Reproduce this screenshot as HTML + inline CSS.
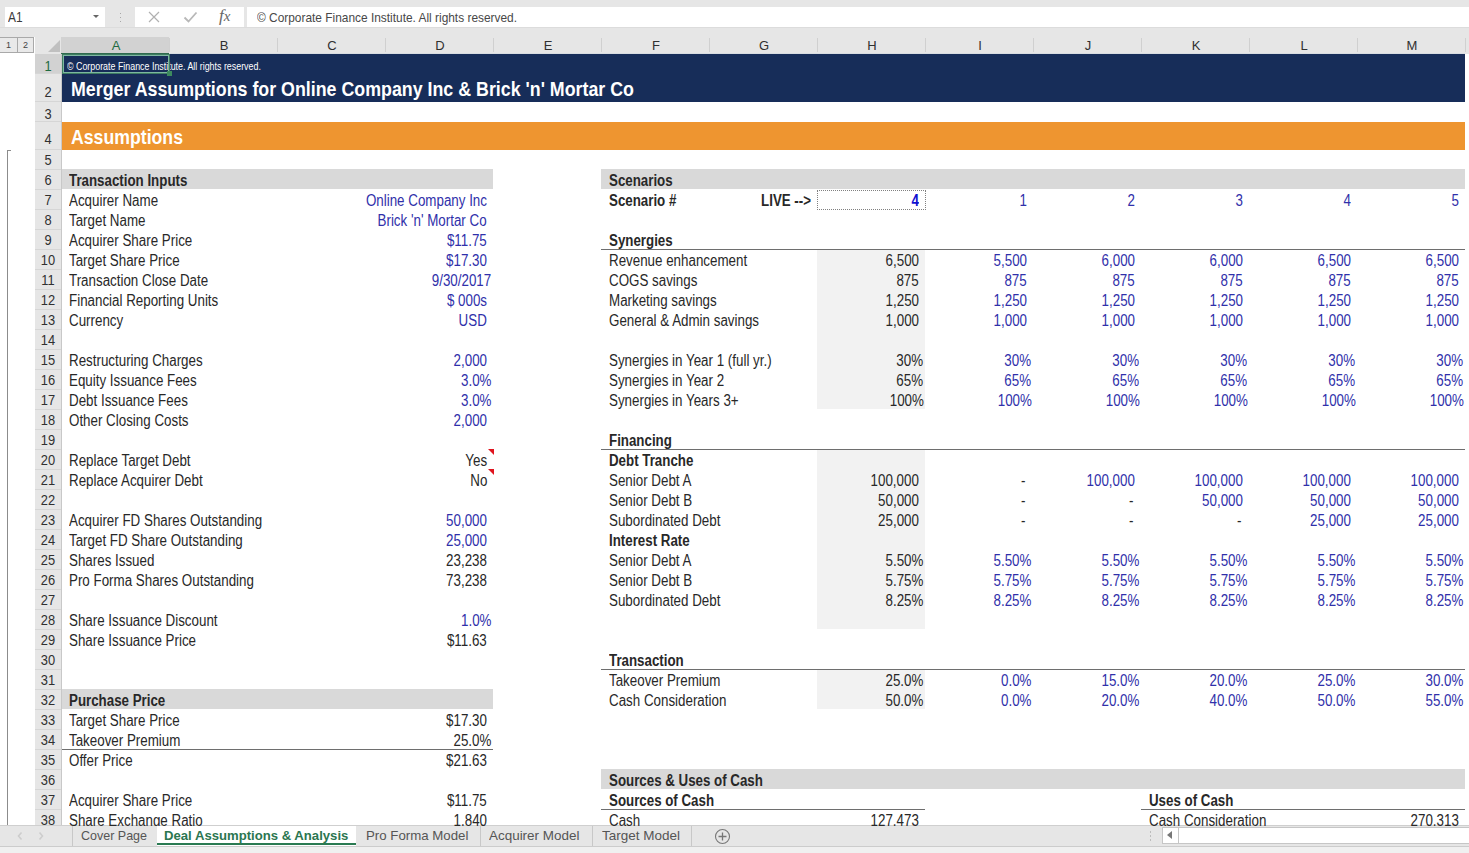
<!DOCTYPE html>
<html><head><meta charset="utf-8"><style>
html,body{margin:0;padding:0;}
body{width:1469px;height:853px;position:relative;overflow:hidden;background:#ffffff;font-family:"Liberation Sans",sans-serif;}
.t{position:absolute;white-space:pre;}
</style></head><body>
<div style="position:absolute;left:0px;top:0px;width:1469px;height:37px;background:#e6e6e6;"></div>
<div style="position:absolute;left:5px;top:7px;width:100px;height:20px;background:#ffffff;"></div>
<div class="t" style="left:8px;top:7px;font-size:14.5px;line-height:20px;color:#3a3a3a;transform:scaleX(0.82);transform-origin:0 0">A1</div>
<div style="position:absolute;left:93px;top:15px;width:0;height:0;border-top:3px solid #666;border-left:3.5px solid transparent;border-right:3.5px solid transparent"></div>
<div style="position:absolute;left:119.5px;top:12.5px;width:1.5px;height:1.5px;background:#a8a8a8;"></div>
<div style="position:absolute;left:119.5px;top:16.5px;width:1.5px;height:1.5px;background:#a8a8a8;"></div>
<div style="position:absolute;left:119.5px;top:20.5px;width:1.5px;height:1.5px;background:#a8a8a8;"></div>
<div style="position:absolute;left:135px;top:7px;width:109px;height:20px;background:#ffffff;"></div>
<svg style="position:absolute;left:147px;top:10px" width="16" height="14"><path d="M2 2 L12 12 M12 2 L2 12" stroke="#b0b0b0" stroke-width="1.2" fill="none"/></svg>
<svg style="position:absolute;left:182px;top:10px" width="18" height="14"><path d="M2.5 7.5 L6.5 11.5 L14.5 2.5" stroke="#b8b8b8" stroke-width="1.8" fill="none"/></svg>
<div class="t" style="left:219px;top:6px;font-family:'Liberation Serif';font-style:italic;font-size:17px;line-height:20px;color:#666">f<span style="font-size:15px">x</span></div>
<div style="position:absolute;left:247px;top:7px;width:1222px;height:20px;background:#ffffff;"></div>
<div class="t" style="left:257px;top:8px;font-size:13px;line-height:20px;color:#484848;transform:scaleX(0.915);transform-origin:0 0">© Corporate Finance Institute. All rights reserved.</div>
<div style="position:absolute;left:0px;top:27px;width:1469px;height:1px;background:#dcdcdc;"></div>
<div style="position:absolute;left:35px;top:37px;width:1434px;height:17px;background:#e6e6e6;"></div>
<div style="position:absolute;left:61px;top:37px;width:108px;height:16px;background:#d2d2d2;"></div>
<div style="position:absolute;left:61px;top:53px;width:108px;height:1px;background:#2f6b4e;"></div>
<div style="position:absolute;left:169px;top:53px;width:1296px;height:1px;background:#d8dde2;"></div>
<div style="position:absolute;left:169px;top:38px;width:1px;height:14px;background:#d0d0d0;"></div>
<div style="position:absolute;left:277px;top:38px;width:1px;height:14px;background:#d0d0d0;"></div>
<div style="position:absolute;left:385px;top:38px;width:1px;height:14px;background:#d0d0d0;"></div>
<div style="position:absolute;left:493px;top:38px;width:1px;height:14px;background:#d0d0d0;"></div>
<div style="position:absolute;left:601px;top:38px;width:1px;height:14px;background:#d0d0d0;"></div>
<div style="position:absolute;left:709px;top:38px;width:1px;height:14px;background:#d0d0d0;"></div>
<div style="position:absolute;left:817px;top:38px;width:1px;height:14px;background:#d0d0d0;"></div>
<div style="position:absolute;left:925px;top:38px;width:1px;height:14px;background:#d0d0d0;"></div>
<div style="position:absolute;left:1033px;top:38px;width:1px;height:14px;background:#d0d0d0;"></div>
<div style="position:absolute;left:1141px;top:38px;width:1px;height:14px;background:#d0d0d0;"></div>
<div style="position:absolute;left:1249px;top:38px;width:1px;height:14px;background:#d0d0d0;"></div>
<div style="position:absolute;left:1357px;top:38px;width:1px;height:14px;background:#d0d0d0;"></div>
<div style="position:absolute;left:1465px;top:38px;width:1px;height:14px;background:#d0d0d0;"></div>
<div class="t" style="left:96px;width:40px;text-align:center;top:37px;font-size:13px;line-height:17px;color:#1e6b41">A</div>
<div class="t" style="left:204px;width:40px;text-align:center;top:37px;font-size:13px;line-height:17px;color:#303030">B</div>
<div class="t" style="left:312px;width:40px;text-align:center;top:37px;font-size:13px;line-height:17px;color:#303030">C</div>
<div class="t" style="left:420px;width:40px;text-align:center;top:37px;font-size:13px;line-height:17px;color:#303030">D</div>
<div class="t" style="left:528px;width:40px;text-align:center;top:37px;font-size:13px;line-height:17px;color:#303030">E</div>
<div class="t" style="left:636px;width:40px;text-align:center;top:37px;font-size:13px;line-height:17px;color:#303030">F</div>
<div class="t" style="left:744px;width:40px;text-align:center;top:37px;font-size:13px;line-height:17px;color:#303030">G</div>
<div class="t" style="left:852px;width:40px;text-align:center;top:37px;font-size:13px;line-height:17px;color:#303030">H</div>
<div class="t" style="left:960px;width:40px;text-align:center;top:37px;font-size:13px;line-height:17px;color:#303030">I</div>
<div class="t" style="left:1068px;width:40px;text-align:center;top:37px;font-size:13px;line-height:17px;color:#303030">J</div>
<div class="t" style="left:1176px;width:40px;text-align:center;top:37px;font-size:13px;line-height:17px;color:#303030">K</div>
<div class="t" style="left:1284px;width:40px;text-align:center;top:37px;font-size:13px;line-height:17px;color:#303030">L</div>
<div class="t" style="left:1392px;width:40px;text-align:center;top:37px;font-size:13px;line-height:17px;color:#303030">M</div>
<div style="position:absolute;left:48px;top:40px;width:0;height:0;border-bottom:12px solid #c0c0c0;border-left:12px solid transparent"></div>
<div style="position:absolute;left:0px;top:37px;width:34px;height:16px;background:#e9e9e9;box-sizing:border-box;border:1px solid #a9a9a9;border-left:none"></div>
<div style="position:absolute;left:17px;top:37px;width:1px;height:16px;background:#a9a9a9;"></div>
<div class="t" style="left:0px;width:17px;text-align:center;top:37px;font-size:9px;line-height:16px;color:#444">1</div>
<div class="t" style="left:17px;width:17px;text-align:center;top:37px;font-size:9px;line-height:16px;color:#444">2</div>
<div style="position:absolute;left:35px;top:54px;width:26px;height:772px;background:#e6e6e6;"></div>
<div style="position:absolute;left:61px;top:54px;width:1px;height:772px;background:#c8c8c8;"></div>
<div style="position:absolute;left:35px;top:54px;width:26px;height:20px;background:#d2d2d2;"></div>
<div style="position:absolute;left:35px;top:73px;width:26px;height:1px;background:#d6d6d6;"></div>
<div class="t" style="left:35px;width:26px;text-align:center;top:57.5px;font-size:14px;line-height:17px;color:#1e6b41;transform:scaleX(0.92)">1</div>
<div style="position:absolute;left:35px;top:101px;width:26px;height:1px;background:#d6d6d6;"></div>
<div class="t" style="left:35px;width:26px;text-align:center;top:84px;font-size:14px;line-height:17px;color:#303030;transform:scaleX(0.92)">2</div>
<div style="position:absolute;left:35px;top:121px;width:26px;height:1px;background:#d6d6d6;"></div>
<div class="t" style="left:35px;width:26px;text-align:center;top:105.5px;font-size:14px;line-height:17px;color:#303030;transform:scaleX(0.92)">3</div>
<div style="position:absolute;left:35px;top:149px;width:26px;height:1px;background:#d6d6d6;"></div>
<div class="t" style="left:35px;width:26px;text-align:center;top:130.7px;font-size:14px;line-height:17px;color:#303030;transform:scaleX(0.92)">4</div>
<div style="position:absolute;left:35px;top:169px;width:26px;height:1px;background:#d6d6d6;"></div>
<div class="t" style="left:35px;width:26px;text-align:center;top:151.8px;font-size:14px;line-height:17px;color:#303030;transform:scaleX(0.92)">5</div>
<div style="position:absolute;left:35px;top:189px;width:26px;height:1px;background:#d6d6d6;"></div>
<div class="t" style="left:35px;width:26px;text-align:center;top:171.8px;font-size:14px;line-height:17px;color:#303030;transform:scaleX(0.92)">6</div>
<div style="position:absolute;left:35px;top:209px;width:26px;height:1px;background:#d6d6d6;"></div>
<div class="t" style="left:35px;width:26px;text-align:center;top:191.8px;font-size:14px;line-height:17px;color:#303030;transform:scaleX(0.92)">7</div>
<div style="position:absolute;left:35px;top:229px;width:26px;height:1px;background:#d6d6d6;"></div>
<div class="t" style="left:35px;width:26px;text-align:center;top:211.8px;font-size:14px;line-height:17px;color:#303030;transform:scaleX(0.92)">8</div>
<div style="position:absolute;left:35px;top:249px;width:26px;height:1px;background:#d6d6d6;"></div>
<div class="t" style="left:35px;width:26px;text-align:center;top:231.8px;font-size:14px;line-height:17px;color:#303030;transform:scaleX(0.92)">9</div>
<div style="position:absolute;left:35px;top:269px;width:26px;height:1px;background:#d6d6d6;"></div>
<div class="t" style="left:35px;width:26px;text-align:center;top:251.8px;font-size:14px;line-height:17px;color:#303030;transform:scaleX(0.92)">10</div>
<div style="position:absolute;left:35px;top:289px;width:26px;height:1px;background:#d6d6d6;"></div>
<div class="t" style="left:35px;width:26px;text-align:center;top:271.8px;font-size:14px;line-height:17px;color:#303030;transform:scaleX(0.92)">11</div>
<div style="position:absolute;left:35px;top:309px;width:26px;height:1px;background:#d6d6d6;"></div>
<div class="t" style="left:35px;width:26px;text-align:center;top:291.8px;font-size:14px;line-height:17px;color:#303030;transform:scaleX(0.92)">12</div>
<div style="position:absolute;left:35px;top:329px;width:26px;height:1px;background:#d6d6d6;"></div>
<div class="t" style="left:35px;width:26px;text-align:center;top:311.8px;font-size:14px;line-height:17px;color:#303030;transform:scaleX(0.92)">13</div>
<div style="position:absolute;left:35px;top:349px;width:26px;height:1px;background:#d6d6d6;"></div>
<div class="t" style="left:35px;width:26px;text-align:center;top:331.8px;font-size:14px;line-height:17px;color:#303030;transform:scaleX(0.92)">14</div>
<div style="position:absolute;left:35px;top:369px;width:26px;height:1px;background:#d6d6d6;"></div>
<div class="t" style="left:35px;width:26px;text-align:center;top:351.8px;font-size:14px;line-height:17px;color:#303030;transform:scaleX(0.92)">15</div>
<div style="position:absolute;left:35px;top:389px;width:26px;height:1px;background:#d6d6d6;"></div>
<div class="t" style="left:35px;width:26px;text-align:center;top:371.8px;font-size:14px;line-height:17px;color:#303030;transform:scaleX(0.92)">16</div>
<div style="position:absolute;left:35px;top:409px;width:26px;height:1px;background:#d6d6d6;"></div>
<div class="t" style="left:35px;width:26px;text-align:center;top:391.8px;font-size:14px;line-height:17px;color:#303030;transform:scaleX(0.92)">17</div>
<div style="position:absolute;left:35px;top:429px;width:26px;height:1px;background:#d6d6d6;"></div>
<div class="t" style="left:35px;width:26px;text-align:center;top:411.8px;font-size:14px;line-height:17px;color:#303030;transform:scaleX(0.92)">18</div>
<div style="position:absolute;left:35px;top:449px;width:26px;height:1px;background:#d6d6d6;"></div>
<div class="t" style="left:35px;width:26px;text-align:center;top:431.8px;font-size:14px;line-height:17px;color:#303030;transform:scaleX(0.92)">19</div>
<div style="position:absolute;left:35px;top:469px;width:26px;height:1px;background:#d6d6d6;"></div>
<div class="t" style="left:35px;width:26px;text-align:center;top:451.8px;font-size:14px;line-height:17px;color:#303030;transform:scaleX(0.92)">20</div>
<div style="position:absolute;left:35px;top:489px;width:26px;height:1px;background:#d6d6d6;"></div>
<div class="t" style="left:35px;width:26px;text-align:center;top:471.8px;font-size:14px;line-height:17px;color:#303030;transform:scaleX(0.92)">21</div>
<div style="position:absolute;left:35px;top:509px;width:26px;height:1px;background:#d6d6d6;"></div>
<div class="t" style="left:35px;width:26px;text-align:center;top:491.8px;font-size:14px;line-height:17px;color:#303030;transform:scaleX(0.92)">22</div>
<div style="position:absolute;left:35px;top:529px;width:26px;height:1px;background:#d6d6d6;"></div>
<div class="t" style="left:35px;width:26px;text-align:center;top:511.8px;font-size:14px;line-height:17px;color:#303030;transform:scaleX(0.92)">23</div>
<div style="position:absolute;left:35px;top:549px;width:26px;height:1px;background:#d6d6d6;"></div>
<div class="t" style="left:35px;width:26px;text-align:center;top:531.8px;font-size:14px;line-height:17px;color:#303030;transform:scaleX(0.92)">24</div>
<div style="position:absolute;left:35px;top:569px;width:26px;height:1px;background:#d6d6d6;"></div>
<div class="t" style="left:35px;width:26px;text-align:center;top:551.8px;font-size:14px;line-height:17px;color:#303030;transform:scaleX(0.92)">25</div>
<div style="position:absolute;left:35px;top:589px;width:26px;height:1px;background:#d6d6d6;"></div>
<div class="t" style="left:35px;width:26px;text-align:center;top:571.8px;font-size:14px;line-height:17px;color:#303030;transform:scaleX(0.92)">26</div>
<div style="position:absolute;left:35px;top:609px;width:26px;height:1px;background:#d6d6d6;"></div>
<div class="t" style="left:35px;width:26px;text-align:center;top:591.8px;font-size:14px;line-height:17px;color:#303030;transform:scaleX(0.92)">27</div>
<div style="position:absolute;left:35px;top:629px;width:26px;height:1px;background:#d6d6d6;"></div>
<div class="t" style="left:35px;width:26px;text-align:center;top:611.8px;font-size:14px;line-height:17px;color:#303030;transform:scaleX(0.92)">28</div>
<div style="position:absolute;left:35px;top:649px;width:26px;height:1px;background:#d6d6d6;"></div>
<div class="t" style="left:35px;width:26px;text-align:center;top:631.8px;font-size:14px;line-height:17px;color:#303030;transform:scaleX(0.92)">29</div>
<div style="position:absolute;left:35px;top:669px;width:26px;height:1px;background:#d6d6d6;"></div>
<div class="t" style="left:35px;width:26px;text-align:center;top:651.8px;font-size:14px;line-height:17px;color:#303030;transform:scaleX(0.92)">30</div>
<div style="position:absolute;left:35px;top:689px;width:26px;height:1px;background:#d6d6d6;"></div>
<div class="t" style="left:35px;width:26px;text-align:center;top:671.8px;font-size:14px;line-height:17px;color:#303030;transform:scaleX(0.92)">31</div>
<div style="position:absolute;left:35px;top:709px;width:26px;height:1px;background:#d6d6d6;"></div>
<div class="t" style="left:35px;width:26px;text-align:center;top:691.8px;font-size:14px;line-height:17px;color:#303030;transform:scaleX(0.92)">32</div>
<div style="position:absolute;left:35px;top:729px;width:26px;height:1px;background:#d6d6d6;"></div>
<div class="t" style="left:35px;width:26px;text-align:center;top:711.8px;font-size:14px;line-height:17px;color:#303030;transform:scaleX(0.92)">33</div>
<div style="position:absolute;left:35px;top:749px;width:26px;height:1px;background:#d6d6d6;"></div>
<div class="t" style="left:35px;width:26px;text-align:center;top:731.8px;font-size:14px;line-height:17px;color:#303030;transform:scaleX(0.92)">34</div>
<div style="position:absolute;left:35px;top:769px;width:26px;height:1px;background:#d6d6d6;"></div>
<div class="t" style="left:35px;width:26px;text-align:center;top:751.8px;font-size:14px;line-height:17px;color:#303030;transform:scaleX(0.92)">35</div>
<div style="position:absolute;left:35px;top:789px;width:26px;height:1px;background:#d6d6d6;"></div>
<div class="t" style="left:35px;width:26px;text-align:center;top:771.8px;font-size:14px;line-height:17px;color:#303030;transform:scaleX(0.92)">36</div>
<div style="position:absolute;left:35px;top:809px;width:26px;height:1px;background:#d6d6d6;"></div>
<div class="t" style="left:35px;width:26px;text-align:center;top:791.8px;font-size:14px;line-height:17px;color:#303030;transform:scaleX(0.92)">37</div>
<div style="position:absolute;left:35px;top:829px;width:26px;height:1px;background:#d6d6d6;"></div>
<div class="t" style="left:35px;width:26px;text-align:center;top:811.8px;font-size:14px;line-height:17px;color:#303030;transform:scaleX(0.92)">38</div>
<div style="position:absolute;left:7px;top:150px;width:1px;height:676px;background:#8c8c8c;"></div>
<div style="position:absolute;left:7px;top:150px;width:4px;height:1px;background:#8c8c8c;"></div>
<div style="position:absolute;left:0px;top:826px;width:1469px;height:20px;background:#e6e6e6;"></div>
<div style="position:absolute;left:0px;top:825px;width:1469px;height:1px;background:#cfcfcf;"></div>
<div style="position:absolute;left:0px;top:846px;width:1469px;height:7px;background:#f0f0f0;"></div>
<div style="position:absolute;left:0px;top:846px;width:1469px;height:1px;background:#cccccc;"></div>
<svg style="position:absolute;left:14px;top:830px" width="40" height="12"><path d="M7.5 2.5 L4.5 6 L7.5 9.5" stroke="#cdcdcd" stroke-width="1.6" fill="none"/><path d="M25.5 2.5 L28.5 6 L25.5 9.5" stroke="#cdcdcd" stroke-width="1.6" fill="none"/></svg>
<div style="position:absolute;left:72px;top:826px;width:1px;height:20px;background:#c8c8c8;"></div>
<div style="position:absolute;left:157px;top:826px;width:199px;height:20px;background:#ffffff;"></div>
<div style="position:absolute;left:157px;top:843px;width:199px;height:1.5px;background:#2a7a52;"></div>
<div class="t" style="left:80.9px;top:826px;font-size:13px;line-height:20px;font-weight:400;color:#555555;transform:scaleX(0.961);transform-origin:0 0">Cover Page</div>
<div class="t" style="left:163.8px;top:826px;font-size:13px;line-height:20px;font-weight:700;color:#2b7650;transform:scaleX(1.010);transform-origin:0 0">Deal Assumptions &amp; Analysis</div>
<div class="t" style="left:365.6px;top:826px;font-size:13px;line-height:20px;font-weight:400;color:#555555;transform:scaleX(1.020);transform-origin:0 0">Pro Forma Model</div>
<div class="t" style="left:489.3px;top:826px;font-size:13px;line-height:20px;font-weight:400;color:#555555;transform:scaleX(1.034);transform-origin:0 0">Acquirer Model</div>
<div class="t" style="left:601.5px;top:826px;font-size:13px;line-height:20px;font-weight:400;color:#555555;transform:scaleX(1.038);transform-origin:0 0">Target Model</div>
<div style="position:absolute;left:479.5px;top:826px;width:1px;height:20px;background:#c8c8c8;"></div>
<div style="position:absolute;left:591.5px;top:826px;width:1px;height:20px;background:#c8c8c8;"></div>
<div style="position:absolute;left:690.5px;top:826px;width:1px;height:20px;background:#c8c8c8;"></div>
<svg style="position:absolute;left:714px;top:828px" width="18" height="18"><circle cx="8.5" cy="8.5" r="7" stroke="#777" stroke-width="1.1" fill="none"/><path d="M8.5 4.5 V12.5 M4.5 8.5 H12.5" stroke="#777" stroke-width="1.3"/></svg>
<div style="position:absolute;left:1149.5px;top:831px;width:1.5px;height:1.5px;background:#bcbcbc;"></div>
<div style="position:absolute;left:1149.5px;top:835px;width:1.5px;height:1.5px;background:#bcbcbc;"></div>
<div style="position:absolute;left:1149.5px;top:839px;width:1.5px;height:1.5px;background:#bcbcbc;"></div>
<div style="position:absolute;left:1162px;top:827px;width:307px;height:17px;background:#ffffff;box-sizing:border-box;border:1px solid #c6c6c6;border-right:none"></div>
<div style="position:absolute;left:1178px;top:827px;width:1px;height:17px;background:#c6c6c6;"></div>
<div style="position:absolute;left:1167px;top:831px;width:0;height:0;border-right:5px solid #777;border-top:4.5px solid transparent;border-bottom:4.5px solid transparent"></div>
<div style="position:absolute;left:0;top:0;width:1469px;height:826px;overflow:hidden">
<div style="position:absolute;left:62px;top:54px;width:1403px;height:48px;background:#172d59;"></div>
<div style="position:absolute;left:62px;top:122px;width:1403px;height:28px;background:#ee9530;"></div>
<div style="position:absolute;left:62px;top:169px;width:431px;height:20px;background:#d9d9d9;"></div>
<div style="position:absolute;left:601px;top:169px;width:864px;height:20px;background:#d9d9d9;"></div>
<div style="position:absolute;left:62px;top:689px;width:431px;height:20px;background:#d9d9d9;"></div>
<div style="position:absolute;left:601px;top:769px;width:864px;height:20px;background:#d9d9d9;"></div>
<div style="position:absolute;left:817px;top:250px;width:108px;height:159px;background:#f2f2f2;"></div>
<div style="position:absolute;left:817px;top:450px;width:108px;height:179px;background:#f2f2f2;"></div>
<div style="position:absolute;left:817px;top:670px;width:108px;height:39px;background:#f2f2f2;"></div>
<div style="position:absolute;left:601px;top:249px;width:864px;height:1px;background:#6e6e6e;"></div>
<div style="position:absolute;left:601px;top:449px;width:864px;height:1px;background:#6e6e6e;"></div>
<div style="position:absolute;left:601px;top:669px;width:864px;height:1px;background:#6e6e6e;"></div>
<div style="position:absolute;left:62px;top:749px;width:431px;height:1px;background:#6e6e6e;"></div>
<div style="position:absolute;left:601px;top:809px;width:324px;height:1px;background:#6e6e6e;"></div>
<div style="position:absolute;left:1141px;top:809px;width:324px;height:1px;background:#6e6e6e;"></div>
<div style="position:absolute;left:817px;top:190px;width:107px;height:18px;border:1px dotted #808080"></div>
<div class="t" style="left:66.5px;top:57px;font-size:10px;line-height:20px;font-weight:400;color:#ffffff;transform:scaleX(0.887);transform-origin:0 0">© Corporate Finance Institute. All rights reserved.</div>
<div class="t" style="left:71px;top:75px;font-size:21px;line-height:28px;font-weight:700;color:#ffffff;transform:scaleX(0.848);transform-origin:0 0">Merger Assumptions for Online Company Inc &amp; Brick &#x27;n&#x27; Mortar Co</div>
<div class="t" style="left:70.5px;top:123px;font-size:21px;line-height:28px;font-weight:700;color:#ffffff;transform:scaleX(0.842);transform-origin:0 0">Assumptions</div>
<div class="t" style="left:68.5px;top:171px;font-size:16px;line-height:20px;font-weight:700;color:#282828;transform:scaleX(0.832);transform-origin:0 0">Transaction Inputs</div>
<div class="t" style="left:68.5px;top:191px;font-size:16px;line-height:20px;font-weight:400;color:#282828;transform:scaleX(0.835);transform-origin:0 0">Acquirer Name</div>
<div class="t" style="left:68.5px;top:211px;font-size:16px;line-height:20px;font-weight:400;color:#282828;transform:scaleX(0.835);transform-origin:0 0">Target Name</div>
<div class="t" style="left:68.5px;top:231px;font-size:16px;line-height:20px;font-weight:400;color:#282828;transform:scaleX(0.835);transform-origin:0 0">Acquirer Share Price</div>
<div class="t" style="left:68.5px;top:251px;font-size:16px;line-height:20px;font-weight:400;color:#282828;transform:scaleX(0.835);transform-origin:0 0">Target Share Price</div>
<div class="t" style="left:68.5px;top:271px;font-size:16px;line-height:20px;font-weight:400;color:#282828;transform:scaleX(0.835);transform-origin:0 0">Transaction Close Date</div>
<div class="t" style="left:68.5px;top:291px;font-size:16px;line-height:20px;font-weight:400;color:#282828;transform:scaleX(0.835);transform-origin:0 0">Financial Reporting Units</div>
<div class="t" style="left:68.5px;top:311px;font-size:16px;line-height:20px;font-weight:400;color:#282828;transform:scaleX(0.835);transform-origin:0 0">Currency</div>
<div class="t" style="left:68.5px;top:351px;font-size:16px;line-height:20px;font-weight:400;color:#282828;transform:scaleX(0.835);transform-origin:0 0">Restructuring Charges</div>
<div class="t" style="left:68.5px;top:371px;font-size:16px;line-height:20px;font-weight:400;color:#282828;transform:scaleX(0.835);transform-origin:0 0">Equity Issuance Fees</div>
<div class="t" style="left:68.5px;top:391px;font-size:16px;line-height:20px;font-weight:400;color:#282828;transform:scaleX(0.835);transform-origin:0 0">Debt Issuance Fees</div>
<div class="t" style="left:68.5px;top:411px;font-size:16px;line-height:20px;font-weight:400;color:#282828;transform:scaleX(0.835);transform-origin:0 0">Other Closing Costs</div>
<div class="t" style="left:68.5px;top:451px;font-size:16px;line-height:20px;font-weight:400;color:#282828;transform:scaleX(0.835);transform-origin:0 0">Replace Target Debt</div>
<div class="t" style="left:68.5px;top:471px;font-size:16px;line-height:20px;font-weight:400;color:#282828;transform:scaleX(0.835);transform-origin:0 0">Replace Acquirer Debt</div>
<div class="t" style="left:68.5px;top:511px;font-size:16px;line-height:20px;font-weight:400;color:#282828;transform:scaleX(0.835);transform-origin:0 0">Acquirer FD Shares Outstanding</div>
<div class="t" style="left:68.5px;top:531px;font-size:16px;line-height:20px;font-weight:400;color:#282828;transform:scaleX(0.835);transform-origin:0 0">Target FD Share Outstanding</div>
<div class="t" style="left:68.5px;top:551px;font-size:16px;line-height:20px;font-weight:400;color:#282828;transform:scaleX(0.835);transform-origin:0 0">Shares Issued</div>
<div class="t" style="left:68.5px;top:571px;font-size:16px;line-height:20px;font-weight:400;color:#282828;transform:scaleX(0.835);transform-origin:0 0">Pro Forma Shares Outstanding</div>
<div class="t" style="left:68.5px;top:611px;font-size:16px;line-height:20px;font-weight:400;color:#282828;transform:scaleX(0.835);transform-origin:0 0">Share Issuance Discount</div>
<div class="t" style="left:68.5px;top:631px;font-size:16px;line-height:20px;font-weight:400;color:#282828;transform:scaleX(0.835);transform-origin:0 0">Share Issuance Price</div>
<div class="t" style="left:68.5px;top:691px;font-size:16px;line-height:20px;font-weight:700;color:#282828;transform:scaleX(0.832);transform-origin:0 0">Purchase Price</div>
<div class="t" style="left:68.5px;top:711px;font-size:16px;line-height:20px;font-weight:400;color:#282828;transform:scaleX(0.835);transform-origin:0 0">Target Share Price</div>
<div class="t" style="left:68.5px;top:731px;font-size:16px;line-height:20px;font-weight:400;color:#282828;transform:scaleX(0.835);transform-origin:0 0">Takeover Premium</div>
<div class="t" style="left:68.5px;top:751px;font-size:16px;line-height:20px;font-weight:400;color:#282828;transform:scaleX(0.835);transform-origin:0 0">Offer Price</div>
<div class="t" style="left:68.5px;top:791px;font-size:16px;line-height:20px;font-weight:400;color:#282828;transform:scaleX(0.835);transform-origin:0 0">Acquirer Share Price</div>
<div class="t" style="left:68.5px;top:811px;font-size:16px;line-height:20px;font-weight:400;color:#282828;transform:scaleX(0.835);transform-origin:0 0">Share Exchange Ratio</div>
<div class="t" style="right:982px;top:191px;font-size:16px;line-height:20px;font-weight:400;color:#3030aa;transform:scaleX(0.835);transform-origin:100% 0">Online Company Inc</div>
<div class="t" style="right:982px;top:211px;font-size:16px;line-height:20px;font-weight:400;color:#3030aa;transform:scaleX(0.835);transform-origin:100% 0">Brick &#x27;n&#x27; Mortar Co</div>
<div class="t" style="right:982px;top:231px;font-size:16px;line-height:20px;font-weight:400;color:#3030aa;transform:scaleX(0.835);transform-origin:100% 0">$11.75</div>
<div class="t" style="right:982px;top:251px;font-size:16px;line-height:20px;font-weight:400;color:#3030aa;transform:scaleX(0.835);transform-origin:100% 0">$17.30</div>
<div class="t" style="right:977.5px;top:271px;font-size:16px;line-height:20px;font-weight:400;color:#3030aa;transform:scaleX(0.835);transform-origin:100% 0">9/30/2017</div>
<div class="t" style="right:982px;top:291px;font-size:16px;line-height:20px;font-weight:400;color:#3030aa;transform:scaleX(0.835);transform-origin:100% 0">$ 000s</div>
<div class="t" style="right:982px;top:311px;font-size:16px;line-height:20px;font-weight:400;color:#3030aa;transform:scaleX(0.835);transform-origin:100% 0">USD</div>
<div class="t" style="right:982px;top:351px;font-size:16px;line-height:20px;font-weight:400;color:#3030aa;transform:scaleX(0.835);transform-origin:100% 0">2,000</div>
<div class="t" style="right:977.5px;top:371px;font-size:16px;line-height:20px;font-weight:400;color:#3030aa;transform:scaleX(0.835);transform-origin:100% 0">3.0%</div>
<div class="t" style="right:977.5px;top:391px;font-size:16px;line-height:20px;font-weight:400;color:#3030aa;transform:scaleX(0.835);transform-origin:100% 0">3.0%</div>
<div class="t" style="right:982px;top:411px;font-size:16px;line-height:20px;font-weight:400;color:#3030aa;transform:scaleX(0.835);transform-origin:100% 0">2,000</div>
<div class="t" style="right:982px;top:451px;font-size:16px;line-height:20px;font-weight:400;color:#282828;transform:scaleX(0.835);transform-origin:100% 0">Yes</div>
<div class="t" style="right:982px;top:471px;font-size:16px;line-height:20px;font-weight:400;color:#282828;transform:scaleX(0.835);transform-origin:100% 0">No</div>
<div class="t" style="right:982px;top:511px;font-size:16px;line-height:20px;font-weight:400;color:#3030aa;transform:scaleX(0.835);transform-origin:100% 0">50,000</div>
<div class="t" style="right:982px;top:531px;font-size:16px;line-height:20px;font-weight:400;color:#3030aa;transform:scaleX(0.835);transform-origin:100% 0">25,000</div>
<div class="t" style="right:982px;top:551px;font-size:16px;line-height:20px;font-weight:400;color:#282828;transform:scaleX(0.835);transform-origin:100% 0">23,238</div>
<div class="t" style="right:982px;top:571px;font-size:16px;line-height:20px;font-weight:400;color:#282828;transform:scaleX(0.835);transform-origin:100% 0">73,238</div>
<div class="t" style="right:977.5px;top:611px;font-size:16px;line-height:20px;font-weight:400;color:#3030aa;transform:scaleX(0.835);transform-origin:100% 0">1.0%</div>
<div class="t" style="right:982px;top:631px;font-size:16px;line-height:20px;font-weight:400;color:#282828;transform:scaleX(0.835);transform-origin:100% 0">$11.63</div>
<div class="t" style="right:982px;top:711px;font-size:16px;line-height:20px;font-weight:400;color:#282828;transform:scaleX(0.835);transform-origin:100% 0">$17.30</div>
<div class="t" style="right:977.5px;top:731px;font-size:16px;line-height:20px;font-weight:400;color:#282828;transform:scaleX(0.835);transform-origin:100% 0">25.0%</div>
<div class="t" style="right:982px;top:751px;font-size:16px;line-height:20px;font-weight:400;color:#282828;transform:scaleX(0.835);transform-origin:100% 0">$21.63</div>
<div class="t" style="right:982px;top:791px;font-size:16px;line-height:20px;font-weight:400;color:#282828;transform:scaleX(0.835);transform-origin:100% 0">$11.75</div>
<div class="t" style="right:982px;top:811px;font-size:16px;line-height:20px;font-weight:400;color:#282828;transform:scaleX(0.835);transform-origin:100% 0">1.840</div>
<div style="position:absolute;left:488px;top:449px;width:0;height:0;border-top:6px solid #e0141e;border-left:6px solid transparent"></div>
<div style="position:absolute;left:488px;top:469px;width:0;height:0;border-top:6px solid #e0141e;border-left:6px solid transparent"></div>
<div class="t" style="left:608.5px;top:171px;font-size:16px;line-height:20px;font-weight:700;color:#282828;transform:scaleX(0.832);transform-origin:0 0">Scenarios</div>
<div class="t" style="left:608.5px;top:191px;font-size:16px;line-height:20px;font-weight:700;color:#282828;transform:scaleX(0.832);transform-origin:0 0">Scenario #</div>
<div class="t" style="left:608.5px;top:231px;font-size:16px;line-height:20px;font-weight:700;color:#282828;transform:scaleX(0.832);transform-origin:0 0">Synergies</div>
<div class="t" style="left:608.5px;top:251px;font-size:16px;line-height:20px;font-weight:400;color:#282828;transform:scaleX(0.835);transform-origin:0 0">Revenue enhancement</div>
<div class="t" style="left:608.5px;top:271px;font-size:16px;line-height:20px;font-weight:400;color:#282828;transform:scaleX(0.835);transform-origin:0 0">COGS savings</div>
<div class="t" style="left:608.5px;top:291px;font-size:16px;line-height:20px;font-weight:400;color:#282828;transform:scaleX(0.835);transform-origin:0 0">Marketing savings</div>
<div class="t" style="left:608.5px;top:311px;font-size:16px;line-height:20px;font-weight:400;color:#282828;transform:scaleX(0.835);transform-origin:0 0">General &amp; Admin savings</div>
<div class="t" style="left:608.5px;top:351px;font-size:16px;line-height:20px;font-weight:400;color:#282828;transform:scaleX(0.835);transform-origin:0 0">Synergies in Year 1 (full yr.)</div>
<div class="t" style="left:608.5px;top:371px;font-size:16px;line-height:20px;font-weight:400;color:#282828;transform:scaleX(0.835);transform-origin:0 0">Synergies in Year 2</div>
<div class="t" style="left:608.5px;top:391px;font-size:16px;line-height:20px;font-weight:400;color:#282828;transform:scaleX(0.835);transform-origin:0 0">Synergies in Years 3+</div>
<div class="t" style="left:608.5px;top:431px;font-size:16px;line-height:20px;font-weight:700;color:#282828;transform:scaleX(0.832);transform-origin:0 0">Financing</div>
<div class="t" style="left:608.5px;top:451px;font-size:16px;line-height:20px;font-weight:700;color:#282828;transform:scaleX(0.832);transform-origin:0 0">Debt Tranche</div>
<div class="t" style="left:608.5px;top:471px;font-size:16px;line-height:20px;font-weight:400;color:#282828;transform:scaleX(0.835);transform-origin:0 0">Senior Debt A</div>
<div class="t" style="left:608.5px;top:491px;font-size:16px;line-height:20px;font-weight:400;color:#282828;transform:scaleX(0.835);transform-origin:0 0">Senior Debt B</div>
<div class="t" style="left:608.5px;top:511px;font-size:16px;line-height:20px;font-weight:400;color:#282828;transform:scaleX(0.835);transform-origin:0 0">Subordinated Debt</div>
<div class="t" style="left:608.5px;top:531px;font-size:16px;line-height:20px;font-weight:700;color:#282828;transform:scaleX(0.832);transform-origin:0 0">Interest Rate</div>
<div class="t" style="left:608.5px;top:551px;font-size:16px;line-height:20px;font-weight:400;color:#282828;transform:scaleX(0.835);transform-origin:0 0">Senior Debt A</div>
<div class="t" style="left:608.5px;top:571px;font-size:16px;line-height:20px;font-weight:400;color:#282828;transform:scaleX(0.835);transform-origin:0 0">Senior Debt B</div>
<div class="t" style="left:608.5px;top:591px;font-size:16px;line-height:20px;font-weight:400;color:#282828;transform:scaleX(0.835);transform-origin:0 0">Subordinated Debt</div>
<div class="t" style="left:608.5px;top:651px;font-size:16px;line-height:20px;font-weight:700;color:#282828;transform:scaleX(0.832);transform-origin:0 0">Transaction</div>
<div class="t" style="left:608.5px;top:671px;font-size:16px;line-height:20px;font-weight:400;color:#282828;transform:scaleX(0.835);transform-origin:0 0">Takeover Premium</div>
<div class="t" style="left:608.5px;top:691px;font-size:16px;line-height:20px;font-weight:400;color:#282828;transform:scaleX(0.835);transform-origin:0 0">Cash Consideration</div>
<div class="t" style="left:608.5px;top:771px;font-size:16px;line-height:20px;font-weight:700;color:#282828;transform:scaleX(0.832);transform-origin:0 0">Sources &amp; Uses of Cash</div>
<div class="t" style="left:608.5px;top:791px;font-size:16px;line-height:20px;font-weight:700;color:#282828;transform:scaleX(0.832);transform-origin:0 0">Sources of Cash</div>
<div class="t" style="left:608.5px;top:811px;font-size:16px;line-height:20px;font-weight:400;color:#282828;transform:scaleX(0.835);transform-origin:0 0">Cash</div>
<div class="t" style="left:1148.5px;top:791px;font-size:16px;line-height:20px;font-weight:700;color:#282828;transform:scaleX(0.832);transform-origin:0 0">Uses of Cash</div>
<div class="t" style="left:1148.5px;top:811px;font-size:16px;line-height:20px;font-weight:400;color:#282828;transform:scaleX(0.835);transform-origin:0 0">Cash Consideration</div>
<div class="t" style="right:657.5px;top:191px;font-size:16px;line-height:20px;font-weight:700;color:#282828;transform:scaleX(0.832);transform-origin:100% 0">LIVE --&gt;</div>
<div class="t" style="right:550px;top:191px;font-size:16px;line-height:20px;font-weight:700;color:#1010d0;transform:scaleX(0.832);transform-origin:100% 0">4</div>
<div class="t" style="right:442px;top:191px;font-size:16px;line-height:20px;font-weight:400;color:#3030aa;transform:scaleX(0.835);transform-origin:100% 0">1</div>
<div class="t" style="right:334px;top:191px;font-size:16px;line-height:20px;font-weight:400;color:#3030aa;transform:scaleX(0.835);transform-origin:100% 0">2</div>
<div class="t" style="right:226px;top:191px;font-size:16px;line-height:20px;font-weight:400;color:#3030aa;transform:scaleX(0.835);transform-origin:100% 0">3</div>
<div class="t" style="right:118px;top:191px;font-size:16px;line-height:20px;font-weight:400;color:#3030aa;transform:scaleX(0.835);transform-origin:100% 0">4</div>
<div class="t" style="right:10px;top:191px;font-size:16px;line-height:20px;font-weight:400;color:#3030aa;transform:scaleX(0.835);transform-origin:100% 0">5</div>
<div class="t" style="right:550px;top:251px;font-size:16px;line-height:20px;font-weight:400;color:#282828;transform:scaleX(0.835);transform-origin:100% 0">6,500</div>
<div class="t" style="right:442px;top:251px;font-size:16px;line-height:20px;font-weight:400;color:#3030aa;transform:scaleX(0.835);transform-origin:100% 0">5,500</div>
<div class="t" style="right:334px;top:251px;font-size:16px;line-height:20px;font-weight:400;color:#3030aa;transform:scaleX(0.835);transform-origin:100% 0">6,000</div>
<div class="t" style="right:226px;top:251px;font-size:16px;line-height:20px;font-weight:400;color:#3030aa;transform:scaleX(0.835);transform-origin:100% 0">6,000</div>
<div class="t" style="right:118px;top:251px;font-size:16px;line-height:20px;font-weight:400;color:#3030aa;transform:scaleX(0.835);transform-origin:100% 0">6,500</div>
<div class="t" style="right:10px;top:251px;font-size:16px;line-height:20px;font-weight:400;color:#3030aa;transform:scaleX(0.835);transform-origin:100% 0">6,500</div>
<div class="t" style="right:550px;top:271px;font-size:16px;line-height:20px;font-weight:400;color:#282828;transform:scaleX(0.835);transform-origin:100% 0">875</div>
<div class="t" style="right:442px;top:271px;font-size:16px;line-height:20px;font-weight:400;color:#3030aa;transform:scaleX(0.835);transform-origin:100% 0">875</div>
<div class="t" style="right:334px;top:271px;font-size:16px;line-height:20px;font-weight:400;color:#3030aa;transform:scaleX(0.835);transform-origin:100% 0">875</div>
<div class="t" style="right:226px;top:271px;font-size:16px;line-height:20px;font-weight:400;color:#3030aa;transform:scaleX(0.835);transform-origin:100% 0">875</div>
<div class="t" style="right:118px;top:271px;font-size:16px;line-height:20px;font-weight:400;color:#3030aa;transform:scaleX(0.835);transform-origin:100% 0">875</div>
<div class="t" style="right:10px;top:271px;font-size:16px;line-height:20px;font-weight:400;color:#3030aa;transform:scaleX(0.835);transform-origin:100% 0">875</div>
<div class="t" style="right:550px;top:291px;font-size:16px;line-height:20px;font-weight:400;color:#282828;transform:scaleX(0.835);transform-origin:100% 0">1,250</div>
<div class="t" style="right:442px;top:291px;font-size:16px;line-height:20px;font-weight:400;color:#3030aa;transform:scaleX(0.835);transform-origin:100% 0">1,250</div>
<div class="t" style="right:334px;top:291px;font-size:16px;line-height:20px;font-weight:400;color:#3030aa;transform:scaleX(0.835);transform-origin:100% 0">1,250</div>
<div class="t" style="right:226px;top:291px;font-size:16px;line-height:20px;font-weight:400;color:#3030aa;transform:scaleX(0.835);transform-origin:100% 0">1,250</div>
<div class="t" style="right:118px;top:291px;font-size:16px;line-height:20px;font-weight:400;color:#3030aa;transform:scaleX(0.835);transform-origin:100% 0">1,250</div>
<div class="t" style="right:10px;top:291px;font-size:16px;line-height:20px;font-weight:400;color:#3030aa;transform:scaleX(0.835);transform-origin:100% 0">1,250</div>
<div class="t" style="right:550px;top:311px;font-size:16px;line-height:20px;font-weight:400;color:#282828;transform:scaleX(0.835);transform-origin:100% 0">1,000</div>
<div class="t" style="right:442px;top:311px;font-size:16px;line-height:20px;font-weight:400;color:#3030aa;transform:scaleX(0.835);transform-origin:100% 0">1,000</div>
<div class="t" style="right:334px;top:311px;font-size:16px;line-height:20px;font-weight:400;color:#3030aa;transform:scaleX(0.835);transform-origin:100% 0">1,000</div>
<div class="t" style="right:226px;top:311px;font-size:16px;line-height:20px;font-weight:400;color:#3030aa;transform:scaleX(0.835);transform-origin:100% 0">1,000</div>
<div class="t" style="right:118px;top:311px;font-size:16px;line-height:20px;font-weight:400;color:#3030aa;transform:scaleX(0.835);transform-origin:100% 0">1,000</div>
<div class="t" style="right:10px;top:311px;font-size:16px;line-height:20px;font-weight:400;color:#3030aa;transform:scaleX(0.835);transform-origin:100% 0">1,000</div>
<div class="t" style="right:545.5px;top:351px;font-size:16px;line-height:20px;font-weight:400;color:#282828;transform:scaleX(0.835);transform-origin:100% 0">30%</div>
<div class="t" style="right:437.5px;top:351px;font-size:16px;line-height:20px;font-weight:400;color:#3030aa;transform:scaleX(0.835);transform-origin:100% 0">30%</div>
<div class="t" style="right:329.5px;top:351px;font-size:16px;line-height:20px;font-weight:400;color:#3030aa;transform:scaleX(0.835);transform-origin:100% 0">30%</div>
<div class="t" style="right:221.5px;top:351px;font-size:16px;line-height:20px;font-weight:400;color:#3030aa;transform:scaleX(0.835);transform-origin:100% 0">30%</div>
<div class="t" style="right:113.5px;top:351px;font-size:16px;line-height:20px;font-weight:400;color:#3030aa;transform:scaleX(0.835);transform-origin:100% 0">30%</div>
<div class="t" style="right:5.5px;top:351px;font-size:16px;line-height:20px;font-weight:400;color:#3030aa;transform:scaleX(0.835);transform-origin:100% 0">30%</div>
<div class="t" style="right:545.5px;top:371px;font-size:16px;line-height:20px;font-weight:400;color:#282828;transform:scaleX(0.835);transform-origin:100% 0">65%</div>
<div class="t" style="right:437.5px;top:371px;font-size:16px;line-height:20px;font-weight:400;color:#3030aa;transform:scaleX(0.835);transform-origin:100% 0">65%</div>
<div class="t" style="right:329.5px;top:371px;font-size:16px;line-height:20px;font-weight:400;color:#3030aa;transform:scaleX(0.835);transform-origin:100% 0">65%</div>
<div class="t" style="right:221.5px;top:371px;font-size:16px;line-height:20px;font-weight:400;color:#3030aa;transform:scaleX(0.835);transform-origin:100% 0">65%</div>
<div class="t" style="right:113.5px;top:371px;font-size:16px;line-height:20px;font-weight:400;color:#3030aa;transform:scaleX(0.835);transform-origin:100% 0">65%</div>
<div class="t" style="right:5.5px;top:371px;font-size:16px;line-height:20px;font-weight:400;color:#3030aa;transform:scaleX(0.835);transform-origin:100% 0">65%</div>
<div class="t" style="right:545.5px;top:391px;font-size:16px;line-height:20px;font-weight:400;color:#282828;transform:scaleX(0.835);transform-origin:100% 0">100%</div>
<div class="t" style="right:437.5px;top:391px;font-size:16px;line-height:20px;font-weight:400;color:#3030aa;transform:scaleX(0.835);transform-origin:100% 0">100%</div>
<div class="t" style="right:329.5px;top:391px;font-size:16px;line-height:20px;font-weight:400;color:#3030aa;transform:scaleX(0.835);transform-origin:100% 0">100%</div>
<div class="t" style="right:221.5px;top:391px;font-size:16px;line-height:20px;font-weight:400;color:#3030aa;transform:scaleX(0.835);transform-origin:100% 0">100%</div>
<div class="t" style="right:113.5px;top:391px;font-size:16px;line-height:20px;font-weight:400;color:#3030aa;transform:scaleX(0.835);transform-origin:100% 0">100%</div>
<div class="t" style="right:5.5px;top:391px;font-size:16px;line-height:20px;font-weight:400;color:#3030aa;transform:scaleX(0.835);transform-origin:100% 0">100%</div>
<div class="t" style="right:550px;top:471px;font-size:16px;line-height:20px;font-weight:400;color:#282828;transform:scaleX(0.835);transform-origin:100% 0">100,000</div>
<div class="t" style="right:443.5px;top:471px;font-size:16px;line-height:20px;font-weight:400;color:#282828;transform:scaleX(0.835);transform-origin:100% 0">-</div>
<div class="t" style="right:334px;top:471px;font-size:16px;line-height:20px;font-weight:400;color:#3030aa;transform:scaleX(0.835);transform-origin:100% 0">100,000</div>
<div class="t" style="right:226px;top:471px;font-size:16px;line-height:20px;font-weight:400;color:#3030aa;transform:scaleX(0.835);transform-origin:100% 0">100,000</div>
<div class="t" style="right:118px;top:471px;font-size:16px;line-height:20px;font-weight:400;color:#3030aa;transform:scaleX(0.835);transform-origin:100% 0">100,000</div>
<div class="t" style="right:10px;top:471px;font-size:16px;line-height:20px;font-weight:400;color:#3030aa;transform:scaleX(0.835);transform-origin:100% 0">100,000</div>
<div class="t" style="right:550px;top:491px;font-size:16px;line-height:20px;font-weight:400;color:#282828;transform:scaleX(0.835);transform-origin:100% 0">50,000</div>
<div class="t" style="right:443.5px;top:491px;font-size:16px;line-height:20px;font-weight:400;color:#282828;transform:scaleX(0.835);transform-origin:100% 0">-</div>
<div class="t" style="right:335.5px;top:491px;font-size:16px;line-height:20px;font-weight:400;color:#282828;transform:scaleX(0.835);transform-origin:100% 0">-</div>
<div class="t" style="right:226px;top:491px;font-size:16px;line-height:20px;font-weight:400;color:#3030aa;transform:scaleX(0.835);transform-origin:100% 0">50,000</div>
<div class="t" style="right:118px;top:491px;font-size:16px;line-height:20px;font-weight:400;color:#3030aa;transform:scaleX(0.835);transform-origin:100% 0">50,000</div>
<div class="t" style="right:10px;top:491px;font-size:16px;line-height:20px;font-weight:400;color:#3030aa;transform:scaleX(0.835);transform-origin:100% 0">50,000</div>
<div class="t" style="right:550px;top:511px;font-size:16px;line-height:20px;font-weight:400;color:#282828;transform:scaleX(0.835);transform-origin:100% 0">25,000</div>
<div class="t" style="right:443.5px;top:511px;font-size:16px;line-height:20px;font-weight:400;color:#282828;transform:scaleX(0.835);transform-origin:100% 0">-</div>
<div class="t" style="right:335.5px;top:511px;font-size:16px;line-height:20px;font-weight:400;color:#282828;transform:scaleX(0.835);transform-origin:100% 0">-</div>
<div class="t" style="right:227.5px;top:511px;font-size:16px;line-height:20px;font-weight:400;color:#282828;transform:scaleX(0.835);transform-origin:100% 0">-</div>
<div class="t" style="right:118px;top:511px;font-size:16px;line-height:20px;font-weight:400;color:#3030aa;transform:scaleX(0.835);transform-origin:100% 0">25,000</div>
<div class="t" style="right:10px;top:511px;font-size:16px;line-height:20px;font-weight:400;color:#3030aa;transform:scaleX(0.835);transform-origin:100% 0">25,000</div>
<div class="t" style="right:545.5px;top:551px;font-size:16px;line-height:20px;font-weight:400;color:#282828;transform:scaleX(0.835);transform-origin:100% 0">5.50%</div>
<div class="t" style="right:437.5px;top:551px;font-size:16px;line-height:20px;font-weight:400;color:#3030aa;transform:scaleX(0.835);transform-origin:100% 0">5.50%</div>
<div class="t" style="right:329.5px;top:551px;font-size:16px;line-height:20px;font-weight:400;color:#3030aa;transform:scaleX(0.835);transform-origin:100% 0">5.50%</div>
<div class="t" style="right:221.5px;top:551px;font-size:16px;line-height:20px;font-weight:400;color:#3030aa;transform:scaleX(0.835);transform-origin:100% 0">5.50%</div>
<div class="t" style="right:113.5px;top:551px;font-size:16px;line-height:20px;font-weight:400;color:#3030aa;transform:scaleX(0.835);transform-origin:100% 0">5.50%</div>
<div class="t" style="right:5.5px;top:551px;font-size:16px;line-height:20px;font-weight:400;color:#3030aa;transform:scaleX(0.835);transform-origin:100% 0">5.50%</div>
<div class="t" style="right:545.5px;top:571px;font-size:16px;line-height:20px;font-weight:400;color:#282828;transform:scaleX(0.835);transform-origin:100% 0">5.75%</div>
<div class="t" style="right:437.5px;top:571px;font-size:16px;line-height:20px;font-weight:400;color:#3030aa;transform:scaleX(0.835);transform-origin:100% 0">5.75%</div>
<div class="t" style="right:329.5px;top:571px;font-size:16px;line-height:20px;font-weight:400;color:#3030aa;transform:scaleX(0.835);transform-origin:100% 0">5.75%</div>
<div class="t" style="right:221.5px;top:571px;font-size:16px;line-height:20px;font-weight:400;color:#3030aa;transform:scaleX(0.835);transform-origin:100% 0">5.75%</div>
<div class="t" style="right:113.5px;top:571px;font-size:16px;line-height:20px;font-weight:400;color:#3030aa;transform:scaleX(0.835);transform-origin:100% 0">5.75%</div>
<div class="t" style="right:5.5px;top:571px;font-size:16px;line-height:20px;font-weight:400;color:#3030aa;transform:scaleX(0.835);transform-origin:100% 0">5.75%</div>
<div class="t" style="right:545.5px;top:591px;font-size:16px;line-height:20px;font-weight:400;color:#282828;transform:scaleX(0.835);transform-origin:100% 0">8.25%</div>
<div class="t" style="right:437.5px;top:591px;font-size:16px;line-height:20px;font-weight:400;color:#3030aa;transform:scaleX(0.835);transform-origin:100% 0">8.25%</div>
<div class="t" style="right:329.5px;top:591px;font-size:16px;line-height:20px;font-weight:400;color:#3030aa;transform:scaleX(0.835);transform-origin:100% 0">8.25%</div>
<div class="t" style="right:221.5px;top:591px;font-size:16px;line-height:20px;font-weight:400;color:#3030aa;transform:scaleX(0.835);transform-origin:100% 0">8.25%</div>
<div class="t" style="right:113.5px;top:591px;font-size:16px;line-height:20px;font-weight:400;color:#3030aa;transform:scaleX(0.835);transform-origin:100% 0">8.25%</div>
<div class="t" style="right:5.5px;top:591px;font-size:16px;line-height:20px;font-weight:400;color:#3030aa;transform:scaleX(0.835);transform-origin:100% 0">8.25%</div>
<div class="t" style="right:545.5px;top:671px;font-size:16px;line-height:20px;font-weight:400;color:#282828;transform:scaleX(0.835);transform-origin:100% 0">25.0%</div>
<div class="t" style="right:437.5px;top:671px;font-size:16px;line-height:20px;font-weight:400;color:#3030aa;transform:scaleX(0.835);transform-origin:100% 0">0.0%</div>
<div class="t" style="right:329.5px;top:671px;font-size:16px;line-height:20px;font-weight:400;color:#3030aa;transform:scaleX(0.835);transform-origin:100% 0">15.0%</div>
<div class="t" style="right:221.5px;top:671px;font-size:16px;line-height:20px;font-weight:400;color:#3030aa;transform:scaleX(0.835);transform-origin:100% 0">20.0%</div>
<div class="t" style="right:113.5px;top:671px;font-size:16px;line-height:20px;font-weight:400;color:#3030aa;transform:scaleX(0.835);transform-origin:100% 0">25.0%</div>
<div class="t" style="right:5.5px;top:671px;font-size:16px;line-height:20px;font-weight:400;color:#3030aa;transform:scaleX(0.835);transform-origin:100% 0">30.0%</div>
<div class="t" style="right:545.5px;top:691px;font-size:16px;line-height:20px;font-weight:400;color:#282828;transform:scaleX(0.835);transform-origin:100% 0">50.0%</div>
<div class="t" style="right:437.5px;top:691px;font-size:16px;line-height:20px;font-weight:400;color:#3030aa;transform:scaleX(0.835);transform-origin:100% 0">0.0%</div>
<div class="t" style="right:329.5px;top:691px;font-size:16px;line-height:20px;font-weight:400;color:#3030aa;transform:scaleX(0.835);transform-origin:100% 0">20.0%</div>
<div class="t" style="right:221.5px;top:691px;font-size:16px;line-height:20px;font-weight:400;color:#3030aa;transform:scaleX(0.835);transform-origin:100% 0">40.0%</div>
<div class="t" style="right:113.5px;top:691px;font-size:16px;line-height:20px;font-weight:400;color:#3030aa;transform:scaleX(0.835);transform-origin:100% 0">50.0%</div>
<div class="t" style="right:5.5px;top:691px;font-size:16px;line-height:20px;font-weight:400;color:#3030aa;transform:scaleX(0.835);transform-origin:100% 0">55.0%</div>
<div class="t" style="right:550px;top:811px;font-size:16px;line-height:20px;font-weight:400;color:#282828;transform:scaleX(0.835);transform-origin:100% 0">127,473</div>
<div class="t" style="right:10px;top:811px;font-size:16px;line-height:20px;font-weight:400;color:#282828;transform:scaleX(0.835);transform-origin:100% 0">270,313</div>
</div>
<div style="position:absolute;left:62px;top:54px;width:106px;height:18px;border:1px solid #3f7d62;outline:1px solid #7db8a0;outline-offset:-2px"></div>
<div style="position:absolute;left:167px;top:71px;width:5px;height:5px;background:#3d8a5e"></div>
</body></html>
